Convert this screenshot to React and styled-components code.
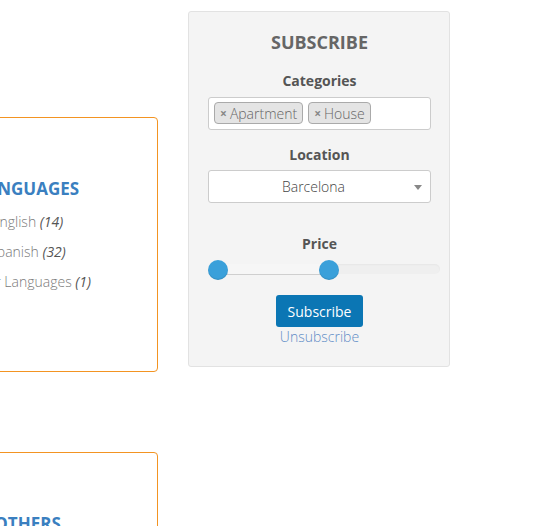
import React from 'react'
import styled, { createGlobalStyle } from 'styled-components'

const GlobalStyle = createGlobalStyle`
  html, body {
    margin: 0;
    padding: 0;
    background: #fff;
    overflow: hidden;
  }
  body {
    font-family: "Open Sans", "Liberation Sans", sans-serif;
    font-size: 14px;
  }
`

const Page = styled.div`
  display: flex;
  align-items: flex-start;
  gap: 30px;
  margin-left: -103px;
  width: 700px;
`

const Column = styled.div`
  display: flex;
  flex-direction: column;
  gap: 80px;
  padding-top: 117px;
  width: 261px;
`

const Card = styled.div`
  box-sizing: border-box;
  height: 255px;
  border: 1px solid #f39422;
  border-radius: 4px;
  background: #fff;
  text-align: center;
  padding-top: 59px;
`

const CardTitle = styled.h3`
  margin: 0 0 6px;
  font-size: 17px;
  line-height: 24px;
  font-weight: 700;
  color: #3a7fc0;
  text-transform: uppercase;
`

const List = styled.ul`
  list-style: none;
  margin: 0;
  padding: 0;
`

const Item = styled.li`
  line-height: 30px;
  font-size: 14px;
  font-weight: 300;
  color: #7a7a7a;

  em {
    font-weight: 400;
    color: #555;
  }
`

const Panel = styled.div`
  box-sizing: border-box;
  margin-top: 11px;
  width: 262px;
  height: 356px;
  padding: 18px 18px 0 19px;
  background: #f4f4f4;
  border: 1px solid #e2e2e2;
  border-radius: 3px;
  display: flex;
  flex-direction: column;
  align-items: center;
  text-align: center;
`

const PanelTitle = styled.h2`
  margin: 0;
  font-size: 18px;
  line-height: 24px;
  font-weight: 700;
  color: #666;
`

const Label = styled.div`
  margin-top: ${p => p.$gap}px;
  font-size: 14px;
  line-height: 20px;
  font-weight: 700;
  color: #555;
`

const TagBox = styled.div`
  box-sizing: border-box;
  margin-top: 6px;
  width: 100%;
  height: 33px;
  padding: 4px 5px;
  display: flex;
  gap: 5px;
  background: #fff;
  border: 1px solid #cccccc;
  border-radius: 3px;
`

const Tag = styled.span`
  box-sizing: border-box;
  height: 22px;
  padding: 0 5px;
  display: inline-flex;
  align-items: center;
  gap: 3px;
  background: #e4e4e4;
  border: 1px solid #aaa;
  border-radius: 4px;
  font-size: 14px;
  font-weight: 300;
  color: #666;

  b {
    font-size: 12px;
    font-weight: 700;
    color: #888;
  }
`

const Select = styled.div`
  box-sizing: border-box;
  position: relative;
  margin-top: 5px;
  width: 100%;
  height: 33px;
  padding-right: 12px;
  display: flex;
  align-items: center;
  justify-content: center;
  background: #fff;
  border: 1px solid #cccccc;
  border-radius: 3px;
  color: #444;
  font-size: 14px;
  font-weight: 300;
`

const Arrow = styled.span`
  position: absolute;
  right: 8px;
  top: 14px;
  border-left: 4px solid transparent;
  border-right: 4px solid transparent;
  border-top: 5px solid #888;
`

const Slider = styled.div`
  position: relative;
  align-self: flex-start;
  margin-top: 6px;
  width: calc(100% + 9px);
  height: 20px;
`

const Track = styled.div`
  position: absolute;
  left: 10px;
  right: 0;
  top: 4px;
  height: 10px;
  border-radius: 5px;
  background: #efefef;
  box-shadow: inset 0 1px 2px rgba(0, 0, 0, 0.04);
`

const Range = styled.div`
  position: absolute;
  top: 4px;
  height: 10px;
  background: #f6f6f6;
  border-bottom: 1px solid #cfcfcf;
`

const Handle = styled.div`
  position: absolute;
  top: 0;
  width: 20px;
  height: 20px;
  margin-left: -10px;
  border-radius: 50%;
  background: #3aa0da;
  box-shadow: inset 0 -1px 1px rgba(0, 0, 0, 0.12);
`

const Button = styled.button`
  margin-top: 15px;
  height: 32px;
  padding: 0 12px;
  border: none;
  border-radius: 3px;
  background: #0b76b4;
  color: #fff;
  font-family: inherit;
  font-size: 14px;
`

const Link = styled.a`
  line-height: 20px;
  font-size: 14px;
  font-weight: 300;
  color: #5f8cc6;
  text-decoration: none;
`

const languages = [
  { name: 'English', count: 14 },
  { name: 'Spanish', count: 32 },
  { name: 'Other Languages', count: 1 },
]

const price = { min: 0, max: 1000000, from: 0, to: 524000 }

export default function App() {
  const usable = 212
  const toX = v => 10 + (v - price.min) / (price.max - price.min) * usable

  return (
    <>
      <GlobalStyle />
      <Page>
        <Column>
          <Card>
            <CardTitle>Languages</CardTitle>
            <List>
              {languages.map(l => (
                <Item key={l.name}>
                  {l.name} <em>({l.count})</em>
                </Item>
              ))}
            </List>
          </Card>
          <Card>
            <CardTitle>Others</CardTitle>
          </Card>
        </Column>

        <Panel>
          <PanelTitle>SUBSCRIBE</PanelTitle>
          <Label $gap={17}>Categories</Label>
          <TagBox>
            <Tag><b>×</b>Apartment</Tag>
            <Tag><b>×</b>House</Tag>
          </TagBox>
          <Label $gap={15}>Location</Label>
          <Select>
            Barcelona
            <Arrow />
          </Select>
          <Label $gap={31}>Price</Label>
          <Slider>
            <Track />
            <Range style={{ left: toX(price.from), width: toX(price.to) - toX(price.from) }} />
            <Handle style={{ left: toX(price.from) }} />
            <Handle style={{ left: toX(price.to) }} />
          </Slider>
          <Button>Subscribe</Button>
          <Link href="#">Unsubscribe</Link>
        </Panel>
      </Page>
    </>
  )
}
